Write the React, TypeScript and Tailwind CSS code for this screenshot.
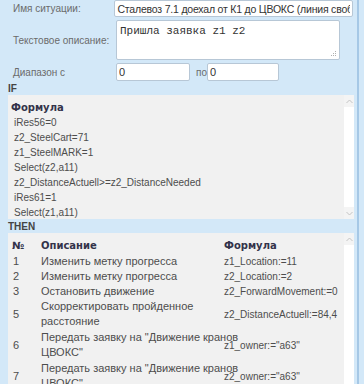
import React from "react";

const ifLines = [
  "iRes56=0",
  "z2_SteelCart=71",
  "z1_SteelMARK=1",
  "Select(z2,a11)",
  "z2_DistanceActuell>=z2_DistanceNeeded",
  "iRes61=1",
  "Select(z1,a11)",
];

const thenRows = [
  { n: "1", d: ["Изменить метку прогресса"], f: "z1_Location:=11" },
  { n: "2", d: ["Изменить метку прогресса"], f: "z2_Location:=2" },
  { n: "3", d: ["Остановить движение"], f: "z2_ForwardMovement:=0" },
  { n: "5", d: ["Скорректировать пройденное", "расстояние"], f: "z2_DistanceActuell:=84,4" },
  { n: "6", d: ["Передать заявку на \"Движение кранов", "ЦВОКС\""], f: "z1_owner:=\"a63\"" },
  { n: "7", d: ["Передать заявку на \"Движение кранов", "ЦВОКС\""], f: "z2_owner:=\"a63\"" },
];

function ScrollBar({ down = true }: { down?: boolean }) {
  return (
    <div className="w-[10px] shrink-0 bg-white flex flex-col justify-between items-center">
      <div className="w-[10px] h-[12px] bg-[#f4f4f4] flex items-center justify-center">
        <svg width="7" height="5" viewBox="0 0 7 5">
          <path d="M0.5 4 L3.5 1 L6.5 4" fill="none" stroke="#c4c4c4" strokeWidth="1" />
        </svg>
      </div>
      {down && (
        <div className="w-[10px] h-[12px] bg-[#f4f4f4] flex items-center justify-center">
          <svg width="7" height="5" viewBox="0 0 7 5">
            <path d="M0.5 1 L3.5 4 L6.5 1" fill="none" stroke="#c4c4c4" strokeWidth="1" />
          </svg>
        </div>
      )}
    </div>
  );
}

export default function App() {
  return (
    <div className="w-[364px] h-[384px] overflow-hidden bg-[#d3e8f8] flex font-['Liberation_Sans',Arial,sans-serif] text-[11px]">
      <div className="w-[357px] shrink-0 pl-[8px] pr-[4px] flex flex-col">
        {/* form rows */}
        <div className="flex items-center h-[17px]">
          <span className="w-[108px] pl-[5px] text-[10px] text-[#6b6b6b] whitespace-nowrap">Имя ситуации:</span>
          <input
            readOnly
            value="Сталевоз 7.1 доехал от К1 до ЦВОКС (линия свободна)"
            className="w-[242px] h-[17px] bg-white border border-[#b7c7d6] rounded-[2px] px-[2px] text-[#333] text-[10.5px] tracking-[-0.2px] outline-none"
          />
        </div>
        <div className="flex items-center mt-[3px]">
          <span className="w-[108px] pl-[5px] text-[10px] text-[#6b6b6b] whitespace-nowrap">Текстовое описание:</span>
          <div className="relative w-[224px] h-[40px] bg-white border border-[#b7c7d6] rounded-[2px] px-[3px] pt-[2px] font-['Liberation_Mono',monospace] text-[11px] text-[#333]">
            Пришла заявка z1 z2
            <svg className="absolute right-[2px] bottom-[2px]" width="7" height="7" viewBox="0 0 7 7">
              <rect x="5" y="1" width="1" height="1" fill="#b0b0b0" />
              <rect x="3" y="3" width="1" height="1" fill="#b0b0b0" />
              <rect x="5" y="3" width="1" height="1" fill="#b0b0b0" />
              <rect x="1" y="5" width="1" height="1" fill="#b0b0b0" />
              <rect x="3" y="5" width="1" height="1" fill="#b0b0b0" />
              <rect x="5" y="5" width="1" height="1" fill="#b0b0b0" />
            </svg>
          </div>
        </div>
        <div className="flex items-center mt-[3px] h-[18px]">
          <span className="w-[108px] pl-[5px] text-[10px] text-[#6b6b6b] whitespace-nowrap">Диапазон с</span>
          <input
            readOnly
            value="0"
            className="w-[74px] h-[18px] bg-white border border-[#b7c7d6] rounded-[2px] px-[2px] text-[#333] text-[11px] outline-none"
          />
          <span className="ml-[6px] text-[10px] text-[#6b6b6b]">по</span>
          <input
            readOnly
            value="0"
            className="w-[72px] h-[18px] bg-white border border-[#b7c7d6] rounded-[2px] px-[2px] text-[#333] text-[11px] outline-none"
          />
        </div>

        {/* IF */}
        <div className="h-[13px] mt-[1px] text-[10px] font-bold text-[#444] leading-[13px]">IF</div>
        <div className="flex h-[124px] mr-[-1px]">
          <div className="flex-1 bg-[#f1f1f1] pl-[3px] pt-[5px] leading-[15px] text-[10px] text-[#4d4d4d]">
            <div className="font-bold text-[#33334a] font-['DejaVu_Sans',sans-serif] text-[10px]">Формула</div>
            {ifLines.map((l) => (
              <div key={l} className="pl-[3px]">
                {l}
              </div>
            ))}
          </div>
          <ScrollBar />
        </div>

        {/* THEN */}
        <div className="h-[13px] text-[10px] font-bold text-[#444] leading-[13px] mt-[1px]">THEN</div>
        <div className="flex flex-1 mr-[-1px]">
          <div className="flex-1 bg-[#f1f1f1] pt-[5px] text-[#4d4d4d] leading-[15px]">
            <div className="grid grid-cols-[30px_182px_1fr] items-center font-bold text-[#33334a] font-['DejaVu_Sans',sans-serif] text-[10px] pb-[1px]">
              <div className="pl-[4px]">№</div>
              <div className="pl-[3px]">Описание</div>
              <div className="pl-[4px]">Формула</div>
            </div>
            {thenRows.map((r) => (
              <div
                key={r.n}
                className={
                  r.d.length > 1
                    ? "grid grid-cols-[30px_182px_1fr] items-center pb-[1px]"
                    : "grid grid-cols-[30px_182px_1fr] items-center"
                }
              >
                <div className="pl-[5px]">{r.n}</div>
                <div className="pl-[3px] whitespace-nowrap">
                  {r.d.map((line, i) => (
                    <div key={i}>{line}</div>
                  ))}
                </div>
                <div className="pl-[4px] whitespace-nowrap text-[10px]">{r.f}</div>
              </div>
            ))}
          </div>
          <ScrollBar down={false} />
        </div>
      </div>
      <div className="w-[2px] bg-[#a6c8e6] shrink-0" />
      <div className="flex-1" />
    </div>
  );
}
